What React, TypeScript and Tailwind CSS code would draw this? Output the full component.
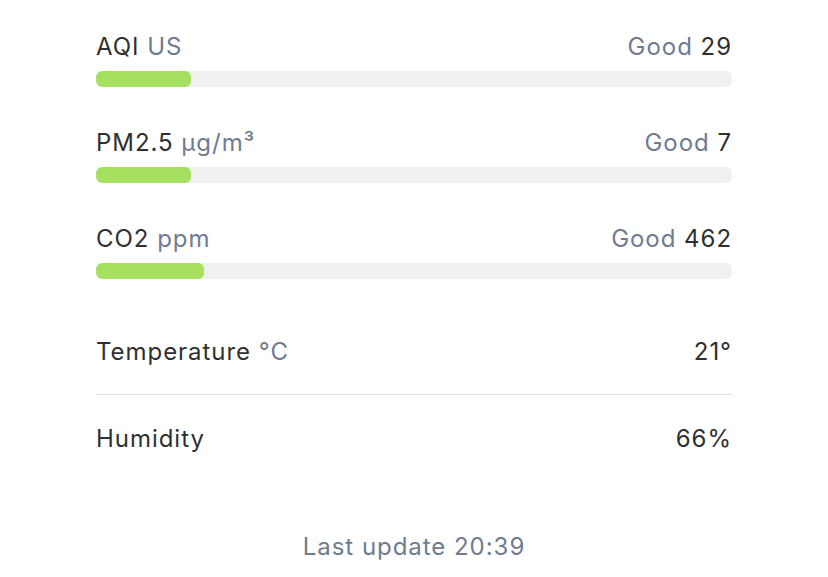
import React from 'react';

type Metric = { label: string; unit: string; status: string; value: string; pct: number };

const metrics: Metric[] = [
  { label: 'AQI', unit: 'US', status: 'Good', value: '29', pct: 15 },
  { label: 'PM2.5', unit: 'µg/m³', status: 'Good', value: '7', pct: 15 },
  { label: 'CO2', unit: 'ppm', status: 'Good', value: '462', pct: 17 },
];

const MetricRow: React.FC<{ m: Metric }> = ({ m }) => (
  <div className="mb-10">
    <div className="flex items-center justify-between h-8">
      <div>
        <span className="text-[#303030]">{m.label}</span>{' '}
        <span className="text-[#6e7b90]">{m.unit}</span>
      </div>
      <div>
        <span className="text-[#6e7b90]">{m.status}</span>{' '}
        <span className="text-[#303030]">{m.value}</span>
      </div>
    </div>
    <div className="mt-2 h-4 rounded-md bg-[#f0f0f0] overflow-hidden">
      <div className="h-full rounded-md bg-[#a5e05f]" style={{ width: `${m.pct}%` }} />
    </div>
  </div>
);

export default function App() {
  return (
    <div
      className="w-[828px] h-[577px] bg-white px-[96px] pt-[31px] text-[24px] leading-8 tracking-[0.04em]"
      style={{ fontFamily: 'Inter, "Noto Sans", sans-serif' }}
    >
      {metrics.map((m) => (
        <MetricRow key={m.label} m={m} />
      ))}

      <div className="pt-[17px]">
        <div className="flex items-center justify-between h-8">
          <div>
            <span className="text-[#303030]">Temperature</span>{' '}
            <span className="text-[#6e7b90]">°C</span>
          </div>
          <span className="text-[#303030]">21°</span>
        </div>
        <div className="mt-[26px] border-t border-[#e2e2e2]" />
        <div className="mt-[28px] flex items-center justify-between h-8">
          <span className="text-[#303030]">Humidity</span>
          <span className="text-[#303030]">66%</span>
        </div>
      </div>

      <div className="mt-[76px] text-center text-[#6e7b90]">Last update 20:39</div>
    </div>
  );
}
